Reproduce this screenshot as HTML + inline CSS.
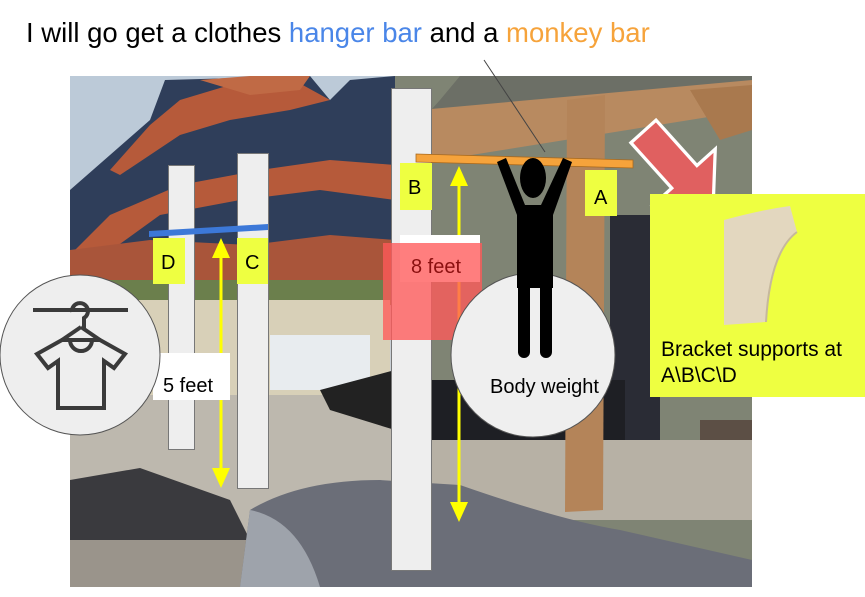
<!DOCTYPE html>
<html><head><meta charset="utf-8"><style>
html,body{margin:0;padding:0;background:#fff;width:865px;height:597px;overflow:hidden}
svg{display:block}
text{font-family:"Liberation Sans",Arial,sans-serif}
</style></head><body>
<svg width="865" height="597" viewBox="0 0 865 597" xmlns="http://www.w3.org/2000/svg">
<rect width="865" height="597" fill="#fff"/>
<text x="26" y="42" font-size="27.5" fill="#000">I will go get a clothes <tspan fill="#4a86e8">hanger bar</tspan> and a <tspan fill="#f6a33b">monkey bar</tspan></text>
<g>
<rect x="70" y="76" width="682" height="511" fill="#c9cfd4"/>
<rect x="70" y="76" width="330" height="230" fill="#bccad8"/>
<polygon points="70,190 150,120 165,80 310,76 330,100 350,80 395,76 395,300 70,300" fill="#2f3e5a"/>
<polygon points="70,255 110,215 180,185 260,170 330,160 395,165 395,200 320,190 240,200 160,215 70,280" fill="#b65a3a"/>
<polygon points="110,170 150,125 180,100 230,85 290,78 330,100 290,110 230,120 180,135 120,175" fill="#b65a3a"/>
<polygon points="70,250 70,300 395,300 395,240 330,235 250,245 150,240" fill="#a9553a"/>
<polygon points="200,80 250,76 310,76 300,90 250,95" fill="#c06a45"/>
<rect x="70" y="280" width="330" height="25" fill="#6b7f4c"/>
<rect x="70" y="300" width="320" height="100" fill="#d8d0b8"/>
<rect x="270" y="335" width="100" height="55" fill="#e8ecef"/>
<rect x="70" y="395" width="330" height="192" fill="#bdb8ae"/>
<polygon points="320,390 395,370 395,430 330,410" fill="#222"/>
<polygon points="70,480 140,468 230,500 250,540 70,550" fill="#3a3a3e"/>
<polygon points="70,540 250,540 260,587 70,587" fill="#9a948b"/>
<rect x="395" y="76" width="357" height="511" fill="#7f8474"/>
<polygon points="395,150 440,100 460,76 752,76 752,100 560,110 420,160" fill="#6c6f66"/>
<polygon points="420,110 752,80 752,110 440,160 420,150" fill="#b88a60"/>
<polygon points="690,90 752,85 752,130 720,140" fill="#a9794e"/>
<rect x="610" y="215" width="50" height="230" fill="#2a2c35"/>
<rect x="700" y="420" width="52" height="60" fill="#5c4f45"/>
<rect x="395" y="380" width="230" height="90" fill="#1e1f24"/>
<rect x="395" y="440" width="357" height="80" fill="#b7b1a5"/>
<polygon points="567,100 605,95 603,510 565,512" fill="#b48459"/>
<path d="M240,587 L250,510 Q300,480 380,480 L460,485 Q560,520 620,530 L752,560 L752,587 Z" fill="#6b6e78"/>
<path d="M250,510 Q300,520 320,587 L240,587 Z" fill="#9ea3ab"/>
</g>
<line x1="484" y1="60" x2="545" y2="152" stroke="#444" stroke-width="1"/>
<rect x="168.5" y="165.5" width="26" height="284" fill="#eeeeee" stroke="#777"/>
<rect x="237.5" y="153.5" width="31" height="335" fill="#eeeeee" stroke="#777"/>
<polygon points="149,231 268,224 268,230 149,237" fill="#3c78d8"/>
<rect x="153" y="238" width="32" height="46" fill="#eeff41"/>
<text x="161" y="269" font-size="20">D</text>
<rect x="237" y="238" width="31" height="46" fill="#eeff41"/>
<text x="245" y="269" font-size="20">C</text>
<line x1="221" y1="250" x2="221" y2="470" stroke="#ffff00" stroke-width="3"/>
<polygon points="212,258 221,238 230,258" fill="#ffff00"/>
<polygon points="212,468 221,488 230,468" fill="#ffff00"/>
<rect x="153" y="353" width="77" height="47" fill="#fff"/>
<text x="163" y="392" font-size="20">5 feet</text>
<circle cx="80" cy="355" r="80" fill="#eeeeee" stroke="#555"/>
<g stroke="#3a3a3a" stroke-width="4" fill="none">
<line x1="33" y1="310" x2="128" y2="310"/>
<path d="M72,312 a8,8 0 1 1 12,6 l0,10"/>
<path d="M62,340 L37,354 L48,368 L58,361 L58,408 L104,408 L104,361 L114,368 L125,354 L100,340 Z"/>
<path d="M70,340 a11,11 0 0 0 22,0"/>
<path d="M81,327 L62,340 M81,327 L100,340"/>
</g>
<rect x="391.5" y="88.5" width="40" height="482" fill="#eeeeee" stroke="#777"/>
<polygon points="416,154 633,160 633,168 416,162" fill="#f6a33b" stroke="#a86a20" stroke-width="0.8"/>
<rect x="400" y="163" width="32" height="47" fill="#eeff41"/>
<text x="408" y="194" font-size="20">B</text>
<rect x="585" y="170" width="32" height="46" fill="#eeff41"/>
<text x="594" y="204" font-size="20">A</text>
<line x1="459" y1="180" x2="459" y2="505" stroke="#ffff00" stroke-width="3"/>
<polygon points="450,186 459,166 468,186" fill="#ffff00"/>
<polygon points="450,502 459,522 468,502" fill="#ffff00"/>
<rect x="400" y="235" width="80" height="47" fill="#fff"/>
<rect x="383" y="243" width="99" height="97" fill="#ff5a5a" opacity="0.78"/>
<text x="411" y="273" font-size="20" fill="#8b1010">8 feet</text>
<circle cx="533" cy="355" r="82" fill="#efefef" stroke="#555"/>
<g fill="#000">
<ellipse cx="533" cy="178" rx="13" ry="20"/>
<path d="M497,162 L506,158 L525,205 L541,205 L563,158 L572,162 L553,215 L553,288 L517,288 L517,215 Z"/>
<rect x="518" y="282" width="12" height="76" rx="6"/>
<rect x="540" y="282" width="12" height="76" rx="6"/>
</g>
<text x="490" y="393" font-size="20">Body weight</text>
<g transform="translate(680,172) rotate(-42) scale(1.3)">
<polygon points="-13,-42 13,-42 13,5 32,5 0,38 -32,5 -13,5" fill="#e06060" stroke="#fff" stroke-width="2.5"/>
</g>
<rect x="650" y="194" width="215" height="203" fill="#eeff41"/>
<path d="M724,220 Q760,210 790,206 L797,232 Q772,252 766,322 L724,325 Z" fill="#e3d7bf"/>
<path d="M766,322 Q770,252 797,232" stroke="#c6b89c" stroke-width="2" fill="none"/>
<text x="661" y="356" font-size="21">Bracket supports at</text>
<text x="661" y="382" font-size="21">A\B\C\D</text>
</svg>
</body></html>
